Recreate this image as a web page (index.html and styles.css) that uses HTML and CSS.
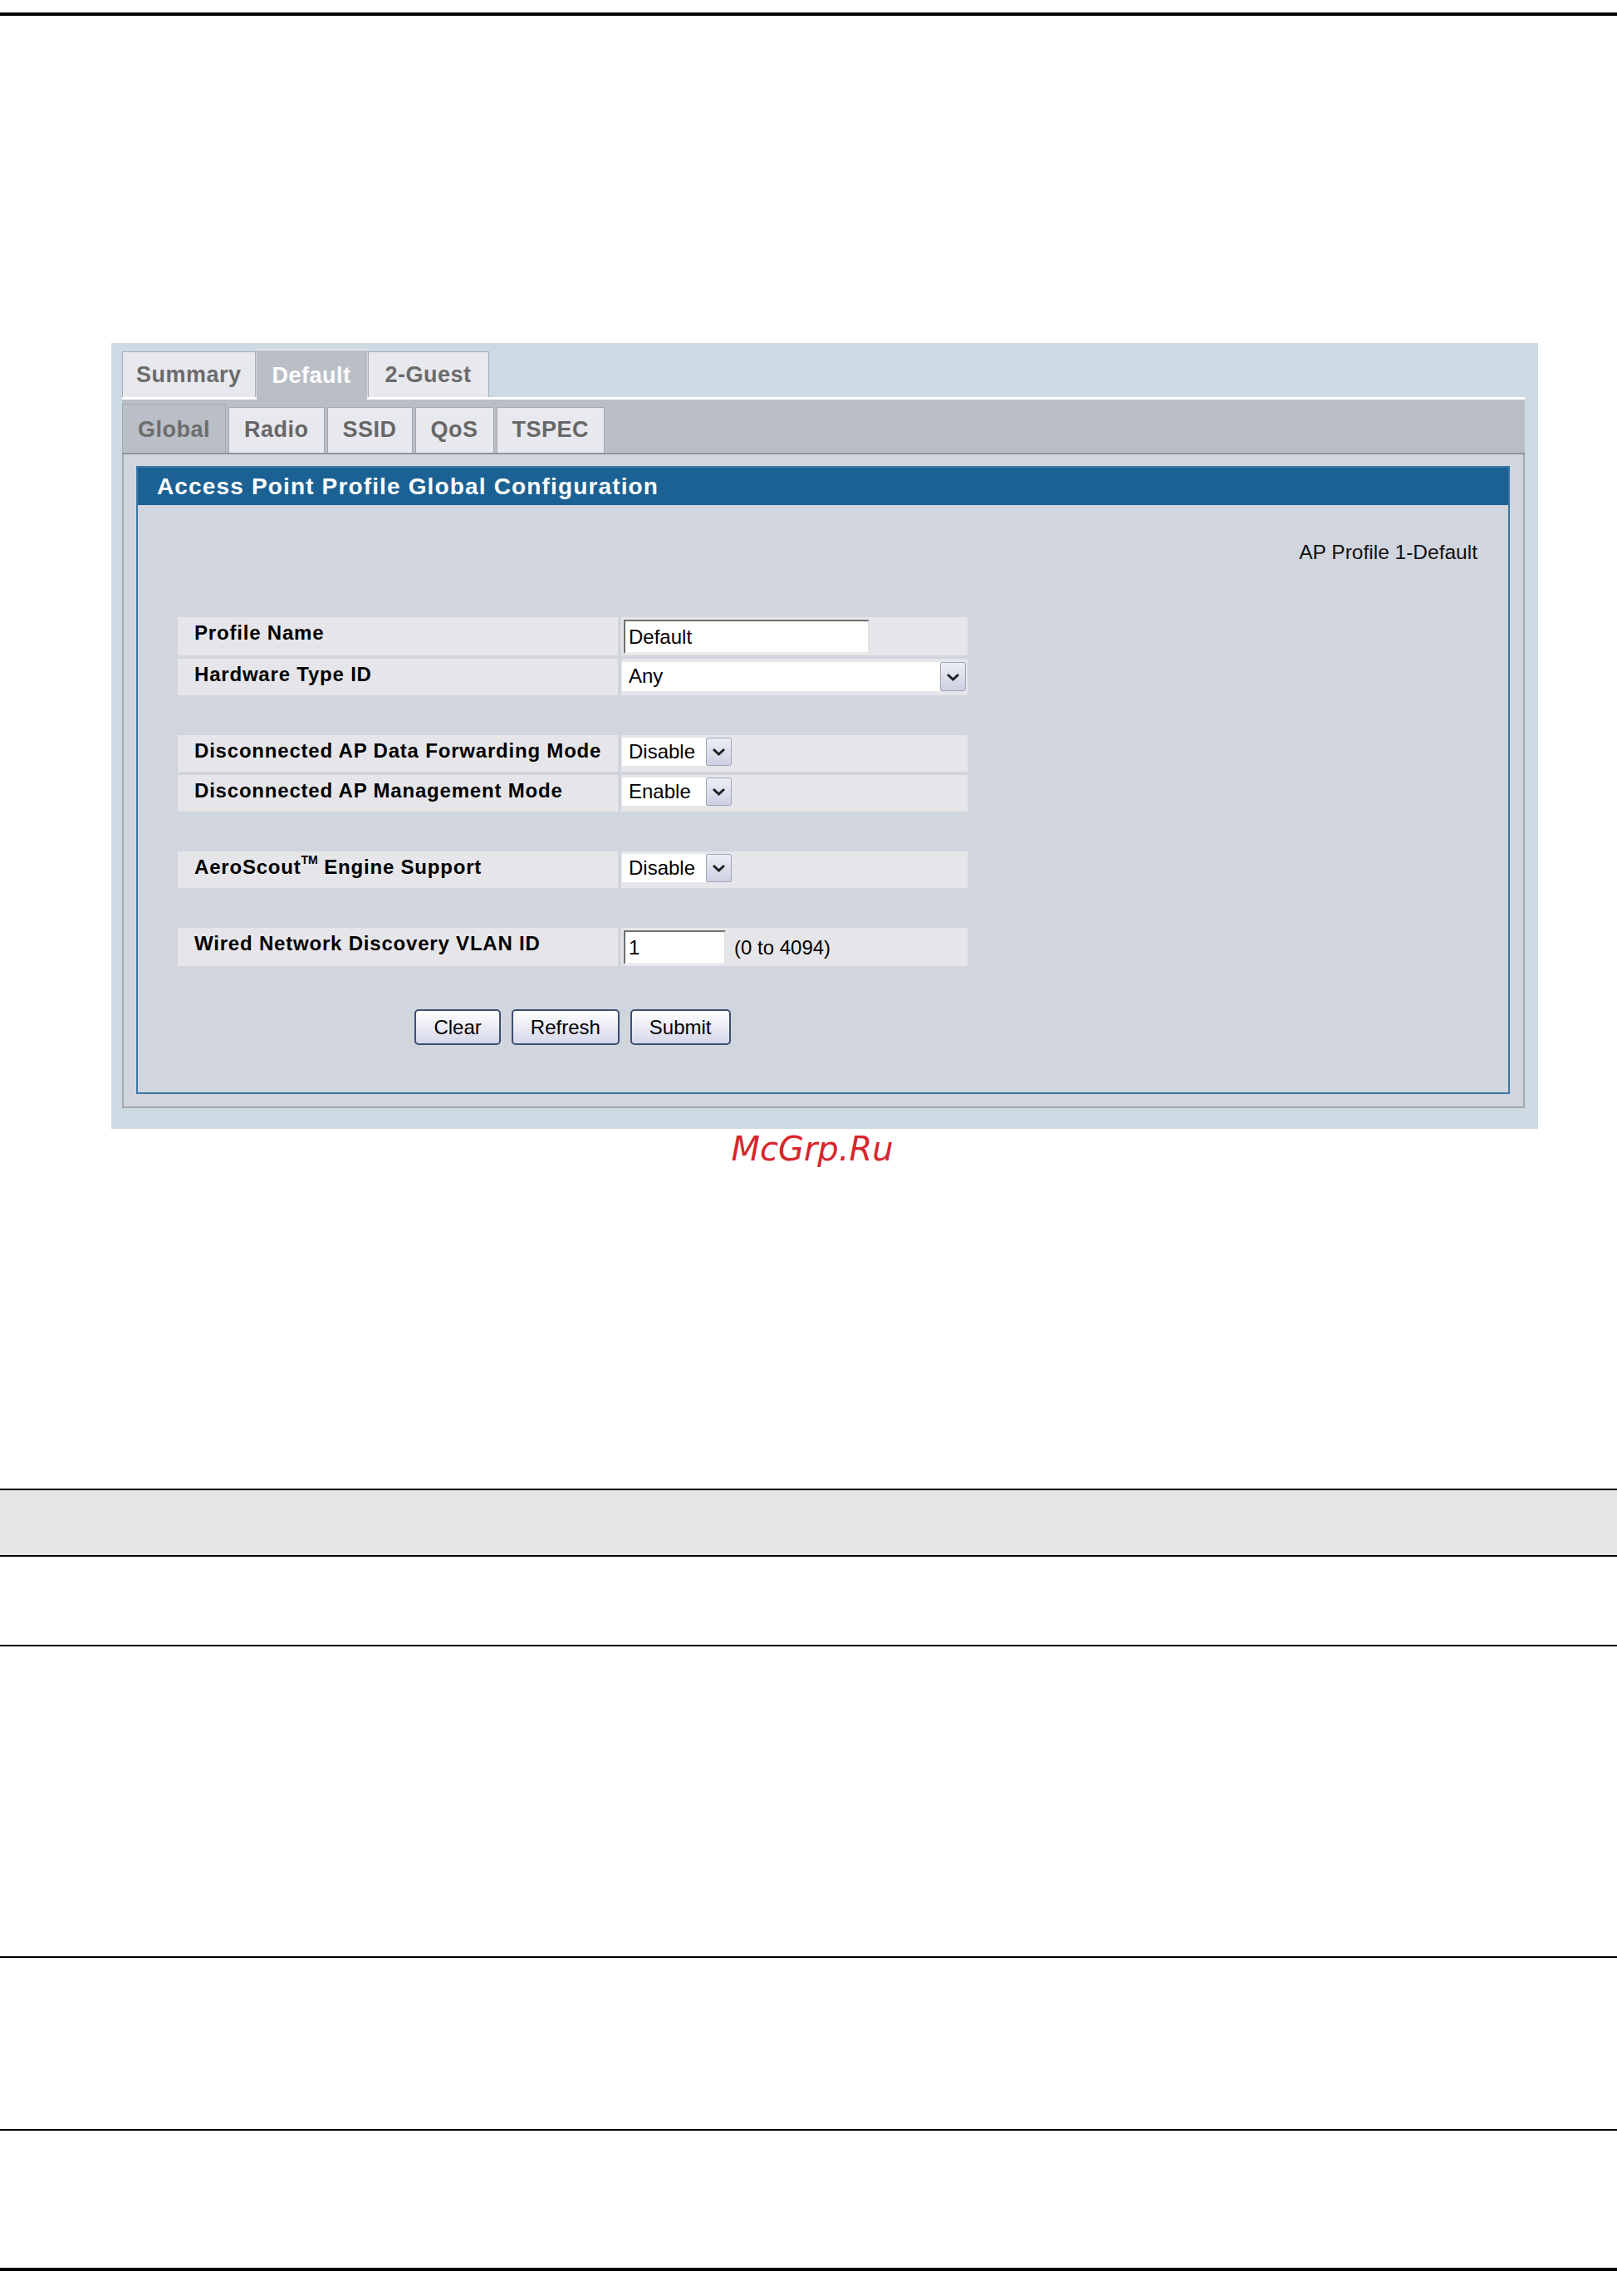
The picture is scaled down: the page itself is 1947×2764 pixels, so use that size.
FILE: index.html
```html
<!DOCTYPE html>
<html lang="en">
<head>
    <meta charset="UTF-8">
    <title>Access Point Profile Global Configuration</title>
    <link rel="stylesheet" href="styles.css">
</head>
<body>
    <div class="rule-top"></div>

    <div class="panel">
        <div class="tabs">
            <span class="tab">Summary</span>
            <span class="tab active">Default</span>
            <span class="tab guest">2-Guest</span>
        </div>
        <div class="frame">
            <div class="subtabs">
                <span class="subtab active">Global</span>
                <span class="subtab">Radio</span>
                <span class="subtab">SSID</span>
                <span class="subtab">QoS</span>
                <span class="subtab">TSPEC</span>
            </div>
            <div class="content">
                <div class="box">
                    <div class="box-title">Access Point Profile Global Configuration</div>
                    <div class="box-body">
                        <div class="ap-name">AP Profile 1-Default</div>

                        <table class="cfg">
                            <tr class="tall">
                                <td class="lbl">Profile Name</td>
                                <td class="val"><input type="text" class="txt wide" value="Default"></td>
                            </tr>
                            <tr>
                                <td class="lbl">Hardware Type ID</td>
                                <td class="val">
                                    <span class="select big">
                                        <span class="sel-val">Any</span>
                                        <span class="sel-btn"><svg width="17" height="10" viewBox="0 0 17 10"><path d="M2 2 L8.5 8 L15 2" fill="none" stroke="#202020" stroke-width="3"/></svg></span>
                                    </span>
                                </td>
                            </tr>
                            <tr class="sp"><td colspan="2"></td></tr>
                            <tr>
                                <td class="lbl">Disconnected AP Data Forwarding Mode</td>
                                <td class="val">
                                    <span class="select">
                                        <span class="sel-val">Disable</span>
                                        <span class="sel-btn"><svg width="17" height="10" viewBox="0 0 17 10"><path d="M2 2 L8.5 8 L15 2" fill="none" stroke="#202020" stroke-width="3"/></svg></span>
                                    </span>
                                </td>
                            </tr>
                            <tr>
                                <td class="lbl">Disconnected AP Management Mode</td>
                                <td class="val">
                                    <span class="select">
                                        <span class="sel-val">Enable</span>
                                        <span class="sel-btn"><svg width="17" height="10" viewBox="0 0 17 10"><path d="M2 2 L8.5 8 L15 2" fill="none" stroke="#202020" stroke-width="3"/></svg></span>
                                    </span>
                                </td>
                            </tr>
                            <tr class="sp"><td colspan="2"></td></tr>
                            <tr>
                                <td class="lbl">AeroScout<sup>TM</sup> Engine Support</td>
                                <td class="val">
                                    <span class="select">
                                        <span class="sel-val">Disable</span>
                                        <span class="sel-btn"><svg width="17" height="10" viewBox="0 0 17 10"><path d="M2 2 L8.5 8 L15 2" fill="none" stroke="#202020" stroke-width="3"/></svg></span>
                                    </span>
                                </td>
                            </tr>
                            <tr class="sp"><td colspan="2"></td></tr>
                            <tr class="tall">
                                <td class="lbl">Wired Network Discovery VLAN ID</td>
                                <td class="val">
                                    <span class="inline">
                                        <input type="text" class="txt short" value="1">
                                        <span class="hint">(0 to 4094)</span>
                                    </span>
                                </td>
                            </tr>
                        </table>

                        <div class="actions">
                            <button>Clear</button>
                            <button>Refresh</button>
                            <button>Submit</button>
                        </div>
                    </div>
                </div>
            </div>
        </div>
    </div>

    <div class="watermark">McGrp.Ru</div>

    <div class="doc-table">
        <div class="doc-row head"></div>
        <div class="doc-row r1"></div>
        <div class="doc-row r2"></div>
        <div class="doc-row r3"></div>
    </div>

    <div class="rule-bottom"></div>
</body>
</html>
```

FILE: styles.css
```css
body {
    margin: 0;
    font-family: "Liberation Sans", Arial, sans-serif;
    background: #fff;
    color: #000;
}
.rule-top {
    margin-top: 15px;
    height: 4px;
    background: #000;
}
.rule-bottom {
    margin-top: 165px;
    height: 4px;
    background: #000;
}

/* screenshot panel */
.panel {
    margin: 394px 0 0 134px;
    width: 1718px;
    box-sizing: border-box;
    padding: 7px 16px 25px 13px;
    background: #cddae4;
}
.tabs {
    display: flex;
    align-items: flex-end;
    gap: 1px;
    height: 58px;
}
.tab {
    height: 55px;
    box-sizing: border-box;
    padding: 0 16px;
    border: 1px solid #a9abb3;
    border-bottom: none;
    background: #e8e9ee;
    color: #6b6b6b;
    font-size: 27px;
    font-weight: bold;
    letter-spacing: 0.5px;
    line-height: 54px;
}
.tab.guest {
    padding: 0 20px;
}
.tab.active {
    position: relative;
    height: 61px;
    margin-bottom: -3px;
    padding: 2px 19px 1px;
    border: none;
    border-top: 2px solid #e4e6ea;
    background: #babec7;
    color: #fff;
    line-height: 56px;
}
.frame {
    border-top: 3px solid #fff;
}
.subtabs {
    display: flex;
    align-items: flex-end;
    gap: 3px;
    height: 64px;
    background: #babec7;
    border-bottom: 2px solid #8f939a;
}
.subtab {
    height: 55px;
    box-sizing: border-box;
    padding: 0 18px 2px;
    border: 1px solid #a5a8b0;
    border-bottom: none;
    background: #e8e9ee;
    color: #676767;
    font-size: 27px;
    font-weight: bold;
    letter-spacing: 0.5px;
    line-height: 52px;
}
.subtab.active {
    height: 59px;
    padding-top: 4px;
    background: #babec7;
    color: #6d6d6d;
}
.content {
    background: #d1d5de;
    border: 2px solid #a3a7ae;
    border-top: none;
    padding: 14px 16px 15px 15px;
}
.box {
    border: 2px solid #3b78a6;
    background: #d1d5de;
}
.box-title {
    height: 45px;
    background: #1b6193;
    color: #fff;
    font-size: 28px;
    font-weight: bold;
    letter-spacing: 1.15px;
    line-height: 45px;
    padding-left: 23px;
}
.box-body {
    padding: 0 37px 57px 44px;
}
.ap-name {
    margin-top: 44px;
    text-align: right;
    font-size: 24.5px;
    line-height: 26px;
    color: #111;
}

/* form table */
.cfg {
    margin-top: 61px;
    width: 959px;
    border-spacing: 4px;
}
.cfg tr {
    height: 44px;
}
.cfg tr.tall {
    height: 46px;
}
.cfg tr.sp {
    height: 40px;
}
.cfg .lbl {
    width: 510px;
    padding: 5px 0 0 20px;
    vertical-align: top;
    background: #e6e6ea;
    font-size: 24px;
    font-weight: bold;
    letter-spacing: 0.8px;
    line-height: 28px;
}
.cfg .lbl sup {
    font-size: 14px;
    letter-spacing: 0;
    vertical-align: 12px;
    line-height: 0;
}
.cfg .val {
    padding: 3px 0 0 1px;
    vertical-align: top;
    background: #e6e6ea;
}
.cfg .sp td {
    background: none;
    padding: 0;
}
.txt {
    display: block;
    height: 41px;
    box-sizing: border-box;
    margin-left: 2px;
    padding: 0 4px;
    border: 2px solid;
    border-color: #6f6f6f #e2e2e2 #ededed #6f6f6f;
    background: #fff;
    font-family: "Liberation Sans", Arial, sans-serif;
    font-size: 24px;
    color: #000;
}
.txt.wide {
    width: 296px;
}
.txt.short {
    width: 123px;
}
.inline {
    display: flex;
    align-items: center;
    gap: 10px;
}
.hint {
    font-size: 24px;
}
.select {
    display: flex;
    width: 132px;
    height: 34px;
    background: #fff;
}
.select.big {
    width: 414px;
    height: 35px;
    margin-top: 1px;
}
.sel-val {
    flex: 1;
    padding-left: 8px;
    font-size: 24px;
    line-height: 34px;
}
.sel-btn {
    width: 31px;
    box-sizing: border-box;
    display: flex;
    align-items: center;
    justify-content: center;
    border: 1px solid #a1a4b6;
    border-radius: 2px;
    background: linear-gradient(#eceef6, #cdd0e1);
}

/* buttons */
.actions {
    width: 959px;
    margin-top: 48px;
    display: flex;
    justify-content: center;
    gap: 13px;
}
.actions button {
    height: 43px;
    padding: 0 21px;
    border: 2px solid #3e4e70;
    border-radius: 5px;
    background: linear-gradient(#ffffff, #d5d7ea);
    font-family: "Liberation Sans", Arial, sans-serif;
    font-size: 24px;
    color: #000;
}

.watermark {
    margin-top: 1px;
    padding-left: 9px;
    text-align: center;
    font-family: "DejaVu Sans", sans-serif;
    font-style: italic;
    font-size: 40px;
    line-height: 47px;
    color: #d7262b;
}

/* document table below */
.doc-table {
    margin-top: 385px;
}
.doc-row {
    border-bottom: 2px solid #000;
}
.doc-row.head {
    border-top: 2px solid #000;
    height: 78px;
    background: #e6e6e6;
}
.doc-row.r1 {
    height: 106px;
}
.doc-row.r2 {
    height: 373px;
}
.doc-row.r3 {
    height: 206px;
}
```
